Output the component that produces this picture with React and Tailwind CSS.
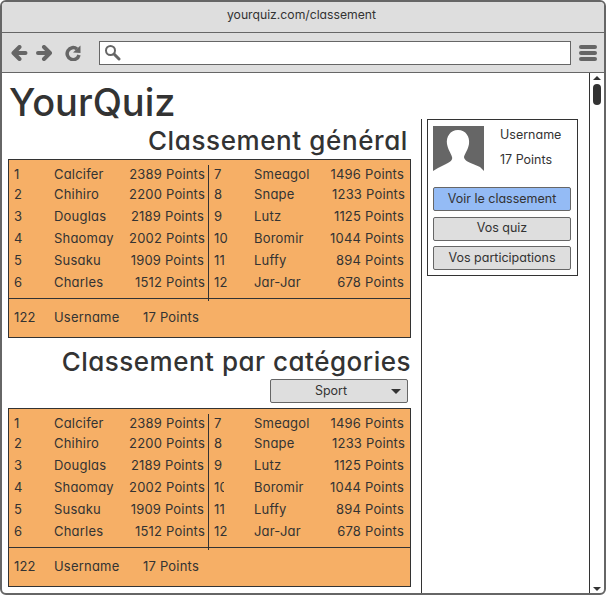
import React from "react";

const leftRows = [
  { n: "1", name: "Calcifer", pts: "2389 Points", h: "h-[19px]", end: "pr-px" },
  { n: "2", name: "Chihiro", pts: "2200 Points", h: "h-[22px]", end: "pr-px" },
  { n: "3", name: "Douglas", pts: "2189 Points", h: "h-[22px]", end: "pr-[2px]" },
  { n: "4", name: "Shaomay", pts: "2002 Points", h: "h-[22px]", end: "pr-px" },
  { n: "5", name: "Susaku", pts: "1909 Points", h: "h-[22px]", end: "pr-[2px]" },
  { n: "6", name: "Charles", pts: "1512 Points", h: "h-[22px]", end: "pr-px" },
];

const rightRows = [
  { n: "7", name: "Smeagol", pts: "1496 Points", h: "h-[19px]", end: "pr-[2px]" },
  { n: "8", name: "Snape", pts: "1233 Points", h: "h-[22px]", end: "pr-px" },
  { n: "9", name: "Lutz", pts: "1125 Points", h: "h-[22px]", end: "pr-[2px]" },
  { n: "10", name: "Boromir", pts: "1044 Points", h: "h-[22px]", end: "pr-[2px]" },
  { n: "11", name: "Luffy", pts: "894 Points", h: "h-[22px]", end: "pr-[2px]" },
  { n: "12", name: "Jar-Jar", pts: "678 Points", h: "h-[22px]", end: "pr-[2px]" },
];

function Row({ row, clipNumber }) {
  return (
    <div className={`flex items-center ${row.h}`}>
      <span className={clipNumber && row.n === "10" ? "w-[10px] mr-[30px] overflow-hidden" : "w-10"}>
        {row.n}
      </span>
      <span className="flex-1">{row.name}</span>
      <span className={row.end}>{row.pts}</span>
    </div>
  );
}

function Ranking({ clipNumber }) {
  return (
    <div className="w-[403px] h-[179px] border-[1.5px] border-[#333] bg-[#f6af66] text-[13px] tracking-[0.2px] text-[#333] flex flex-col">
      <div className="flex h-[139px] border-b-[1.5px] border-[#333] pt-[5px]">
        <div className="relative w-[200px] shrink-0 border-r border-[#333] pl-[5px] pr-[2px]">
          {leftRows.map((row) => (
            <Row key={row.n} row={row} />
          ))}
          <div className="absolute right-[-1px] bottom-[-3px] w-px h-[3px] bg-[#333]" />
        </div>
        <div className="flex-1 pl-[5px] pr-[4px]">
          {rightRows.map((row) => (
            <Row key={row.n} row={row} clipNumber={clipNumber} />
          ))}
        </div>
      </div>
      <div className="flex flex-1 items-center pl-[5px]">
        <span className="w-10">122</span>
        <span className="w-[89px]">Username</span>
        <span>17 Points</span>
      </div>
    </div>
  );
}

function SideButton({ children, active }) {
  return (
    <button
      className={`w-[138px] h-6 rounded-[2px] border border-[#666] text-[12.5px] text-[#333] ${
        active ? "bg-[#94bbf5]" : "bg-[#dedede]"
      }`}
    >
      {children}
    </button>
  );
}

export default function App() {
  return (
    <div
      className="w-[606px] h-[595px] flex flex-col overflow-hidden rounded-[6px] border-2 border-[#666] bg-white text-[#333] [font-feature-settings:'cv11']"
      style={{ fontFamily: '"Inter", "Lato", sans-serif' }}
    >
      <div className="h-[31px] shrink-0 flex items-center justify-center bg-[#dedede] border-b-[1.5px] border-[#666] text-[12.2px] pb-[3px] pr-[3px]">
        yourquiz.com/classement
      </div>

      <div className="h-[40px] shrink-0 flex items-center bg-[#dedede] border-b-[1.5px] border-[#666]">
        <svg width="70" height="16" viewBox="0 0 70 16" className="ml-[9px] mr-[18px] shrink-0 text-[#666]" fill="none" stroke="currentColor">
          <path d="M14.5 8 H3 M8.5 2 L2.5 8 L8.5 14" strokeWidth="4" strokeLinecap="round" strokeLinejoin="round" />
          <path d="M27 8 H38.5 M33 2 L39 8 L33 14" strokeWidth="4" strokeLinecap="round" strokeLinejoin="round" />
          <path d="M66 4 A6 6 0 1 0 68 10" strokeWidth="3.5" />
          <path d="M62 7.5 L69.5 0.5 V8 Z" fill="currentColor" stroke="none" />
        </svg>
        <div className="w-[472px] h-6 shrink-0 flex items-center border border-[#666] bg-white pl-1">
          <svg width="17" height="17" viewBox="0 0 17 17" fill="none" stroke="#666">
            <circle cx="6.5" cy="6.5" r="4.5" strokeWidth="2" />
            <path d="M10 10 L15 15" strokeWidth="3" strokeLinecap="round" />
          </svg>
        </div>
        <div className="ml-2 flex flex-col gap-[2px]">
          <div className="w-[18px] h-1 rounded-full bg-[#666]" />
          <div className="w-[18px] h-1 rounded-full bg-[#666]" />
          <div className="w-[18px] h-1 rounded-full bg-[#666]" />
        </div>
      </div>

      <div className="flex flex-1 min-h-0">
        <div className="w-[419px] shrink-0 pl-[6px]">
          <h1 className="h-[53px] pl-[1px] pt-[6px] text-[38px] leading-[46px] font-medium">YourQuiz</h1>
          <h2 className="h-[33px] pr-[13px] text-right text-[26px] leading-[29px] font-medium tracking-[0.6px]">
            Classement général
          </h2>
          <Ranking />
          <h2 className="mt-[6px] h-[35px] pr-[10px] text-right text-[26px] leading-[35px] font-medium tracking-[0.5px]">
            Classement par catégories
          </h2>
          <div className="flex justify-end pr-[13px] mb-[5px]">
            <div className="relative w-[138px] h-6 flex items-center justify-center rounded-[2px] border border-[#666] bg-[#dedede] text-[12.5px] pr-4">
              Sport
              <span className="absolute right-[6px] top-[9px] border-x-[5px] border-t-[5px] border-x-transparent border-t-[#333]" />
            </div>
          </div>
          <Ranking clipNumber />
        </div>

        <div className="w-[169px] shrink-0 border-r-[1.5px] border-[#333] pt-[46px]">
          <div className="h-full border-l-[1.5px] border-[#333] pl-[5px]">
            <div className="w-[151px] h-[157px] border-[1.5px] border-[#333] pl-[5px] pt-[6px]">
              <div className="flex h-[45px] text-[12.5px]">
                <svg width="51" height="45" viewBox="0 0 51 45" className="shrink-0">
                  <rect width="51" height="45" fill="#666" />
                  <path d="M25 4 C33 4 37 11 36 18 C35 24 32 27 31 31 C31 34 35 36 40 38 L47 41 L51 45 H0 L5 42 L13 38 C17 36 20 34 19 31 C18 27 15 24 14 18 C13 11 17 4 25 4 Z" fill="#fff" />
                </svg>
                <div className="ml-4 flex flex-col">
                  <span className="leading-4 mt-px">Username</span>
                  <span className="mt-[9px] leading-4">17 Points</span>
                </div>
              </div>
              <div className="mt-4 flex flex-col gap-[5.5px]">
                <SideButton active>Voir le classement</SideButton>
                <SideButton>Vos quiz</SideButton>
                <SideButton>Vos participations</SideButton>
              </div>
            </div>
          </div>
        </div>

        <div className="flex-1 flex flex-col items-center pt-[3px] pb-[2px] justify-between">
          <div className="flex flex-col items-center">
            <span className="border-x-[4px] border-b-[4px] border-x-transparent border-b-[#333]" />
            <span className="mt-[4px] w-2 h-[21px] rounded-full bg-[#333]" />
          </div>
          <span className="border-x-[4px] border-t-[4px] border-x-transparent border-t-[#333]" />
        </div>
      </div>
    </div>
  );
}
